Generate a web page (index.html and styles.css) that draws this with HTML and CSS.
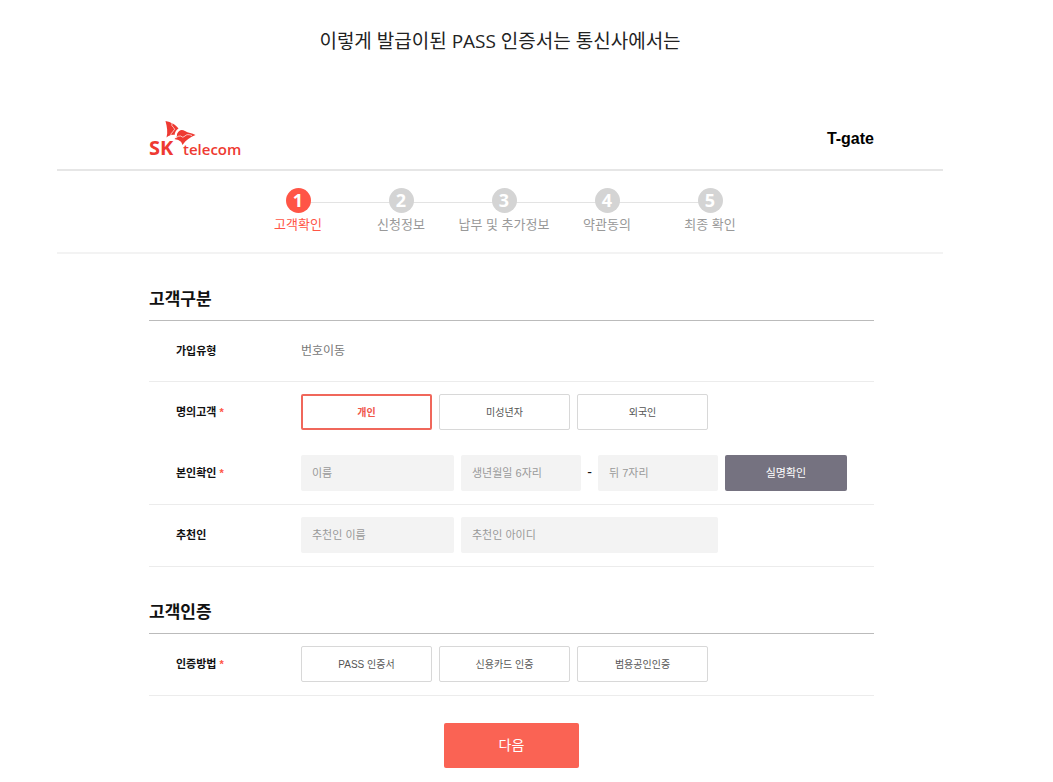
FILE: index.html
```html
<!DOCTYPE html>
<html lang="ko">
<head>
<meta charset="utf-8">
<meta name="viewport" content="width=device-width, initial-scale=1">
<title>SK telecom T-gate</title>
<link rel="stylesheet" href="styles.css">
</head>
<body>
<main class="page">
  <p class="caption">이렇게 발급이된 PASS 인증서는 통신사에서는</p>

  <header class="header">
    <svg class="logo" viewBox="0 0 96 40" role="img" aria-label="SK telecom">
      <path d="M16.500 2 C22 3 27 6 29.500 9.500 C27 11 26 13 25.500 16 C23 15.500 20 16.500 17.500 18.500 C19 13 18 8 16.500 2Z"/>
      <path d="M28 15 C30 10.500 33 10 36 12 C39 14 43 14 46.500 16 C41 18 37 21 33.500 26 C32.500 22 30 21 25.500 20 C28 18.500 28 17 28 15Z"/>
      <path class="logo-split" d="M23 4 Q22 7 24.500 8.500 Q27 10 24 12.500 Q21.500 14.500 21.500 17.500"/>
      <path class="logo-split" d="M43 16.500 Q38 14.500 36 17 Q34 19.500 31.500 17 Q29 16.500 27 19"/>
      <text class="logo-sk" x="0" y="36">SK</text>
      <text class="logo-telecom" x="34" y="36">telecom</text>
    </svg>
    <span class="brand">T-gate</span>
  </header>

  <ol class="steps">
    <li class="step step-current" aria-current="step"><span class="step-number">1</span>고객확인</li>
    <li class="step"><span class="step-number">2</span>신청정보</li>
    <li class="step"><span class="step-number">3</span>납부 및 추가정보</li>
    <li class="step"><span class="step-number">4</span>약관동의</li>
    <li class="step"><span class="step-number">5</span>최종 확인</li>
  </ol>

  <form class="form">
    <section class="section">
      <h2 class="section-title">고객구분</h2>
      <div class="row">
        <span class="row-label">가입유형</span>
        <span class="row-value">번호이동</span>
      </div>
      <div class="row row-open">
        <span class="row-label" id="owner">명의고객 <span class="required">*</span></span>
        <div class="fields" role="group" aria-labelledby="owner">
          <button class="option option-selected" type="button" aria-pressed="true">개인</button>
          <button class="option" type="button" aria-pressed="false">미성년자</button>
          <button class="option" type="button" aria-pressed="false">외국인</button>
        </div>
      </div>
      <div class="row">
        <label class="row-label" for="name">본인확인 <span class="required">*</span></label>
        <div class="fields">
          <input class="field field-name" id="name" type="text" placeholder="이름">
          <div class="resident">
            <input class="field field-digits" type="text" placeholder="생년월일 6자리" aria-label="생년월일 6자리">
            <span class="dash">-</span>
            <input class="field field-digits" type="text" placeholder="뒤 7자리" aria-label="뒤 7자리">
          </div>
          <button class="verify" type="button">실명확인</button>
        </div>
      </div>
      <div class="row">
        <label class="row-label" for="referrer">추천인</label>
        <div class="fields">
          <input class="field field-name" id="referrer" type="text" placeholder="추천인 이름">
          <input class="field field-id" type="text" placeholder="추천인 아이디" aria-label="추천인 아이디">
        </div>
      </div>
    </section>

    <section class="section">
      <h2 class="section-title">고객인증</h2>
      <div class="row">
        <span class="row-label" id="method">인증방법 <span class="required">*</span></span>
        <div class="fields" role="group" aria-labelledby="method">
          <button class="option" type="button">PASS 인증서</button>
          <button class="option" type="button">신용카드 인증</button>
          <button class="option" type="button">범용공인인증</button>
        </div>
      </div>
    </section>

    <button class="next" type="submit">다음</button>
  </form>
</main>
</body>
</html>
```
FILE: styles.css
```css
* {
  box-sizing: border-box;
}

body {
  margin: 0;
  background: #fff;
  color: #111;
  font-family: "Liberation Sans", "Noto Sans CJK KR", sans-serif;
  font-size: 11px;
}

button,
input {
  margin: 0;
  font: inherit;
}

.page {
  padding: 26px 110px 14px 57px;
}

.caption {
  margin: 0;
  color: #222;
  font-family: "Open Sans", "Noto Sans CJK KR", sans-serif;
  font-size: 19px;
  line-height: 30px;
  text-align: center;
}

.header {
  display: flex;
  align-items: center;
  justify-content: space-between;
  margin-top: 52px;
  padding: 11px 69px 10px 92px;
  border-bottom: 2px solid #e6e6e6;
}

.logo {
  width: 96px;
  height: 40px;
  overflow: visible;
  fill: #ee3a32;
}

.logo-split {
  fill: none;
  stroke: #fff;
  stroke-width: 0.7;
}

.logo-sk {
  font: 700 20px "Open Sans", sans-serif;
}

.logo-telecom {
  font: 600 15px "Open Sans", sans-serif;
}

.brand {
  color: #000;
  font-size: 16px;
  font-weight: 700;
}

.steps {
  display: flex;
  justify-content: center;
  margin: 0;
  padding: 17px 0 16px 8px;
  border-bottom: 2px solid #f3f3f3;
  list-style: none;
}

.step {
  position: relative;
  display: flex;
  flex-direction: column;
  align-items: center;
  gap: 1px;
  width: 103px;
  color: #999;
  font-size: 13px;
  line-height: 22px;
  white-space: nowrap;
}

.step + .step::before {
  content: "";
  position: absolute;
  top: 14px;
  right: 50%;
  width: 100%;
  height: 1px;
  background: #e3e3e3;
}

.step-number {
  position: relative;
  z-index: 1;
  width: 25px;
  height: 25px;
  border-radius: 50%;
  background: #d4d4d4;
  color: #fff;
  font-family: "Open Sans", sans-serif;
  font-size: 18px;
  font-weight: 700;
  line-height: 25px;
  text-align: center;
}

.step-current {
  color: #ff5546;
}

.step-current .step-number {
  background: #ff5546;
}

.form {
  display: flex;
  flex-direction: column;
  padding: 0 69px 0 92px;
}

.section {
  padding-top: 32px;
}

.section-title {
  margin: 0;
  padding-bottom: 6px;
  border-bottom: 1px solid #bbb;
  color: #111;
  font-size: 17px;
  font-weight: 700;
  line-height: 28px;
}

.row {
  display: flex;
  align-items: center;
  min-height: 61px;
  padding: 12px 0 13px;
  border-bottom: 1px solid #ececec;
}

.row-open {
  border-bottom: 0;
}

.row-label {
  flex: none;
  width: 152px;
  padding: 0 0 2px 27px;
  font-weight: 700;
}

.required {
  color: #ff5546;
}

.row-value {
  padding-bottom: 2px;
  color: #777;
  font-size: 12px;
}

.fields {
  display: flex;
  flex-wrap: wrap;
  gap: 7px;
}

.option {
  width: 131px;
  height: 36px;
  padding: 0 0 2px;
  border: 1px solid #d8d8d8;
  border-radius: 2px;
  background: #fff;
  color: #555;
  font-size: 10px;
}

.option-selected {
  border: 2px solid #f0675b;
  color: #f0574a;
  font-weight: 700;
}

.field {
  height: 36px;
  padding: 0 11px;
  border: 0;
  border-radius: 2px;
  background: #f3f3f3;
  color: #333;
}

.field::placeholder {
  color: #999;
  opacity: 1;
}

.field-name {
  width: 153px;
}

.resident {
  display: flex;
  align-items: center;
}

.field-digits {
  width: 120px;
}

.dash {
  width: 17px;
  padding-bottom: 2px;
  font-size: 14px;
  text-align: center;
}

.field-id {
  width: 257px;
}

.verify {
  width: 122px;
  height: 36px;
  padding: 0 0 2px;
  border: 0;
  border-radius: 2px;
  background: #757280;
  color: #fff;
}

.next {
  align-self: center;
  width: 135px;
  height: 45px;
  margin-top: 27px;
  padding: 0 0 3px;
  border: 0;
  border-radius: 2px;
  background: #fa6354;
  color: #fff;
  font-size: 14px;
}
```
